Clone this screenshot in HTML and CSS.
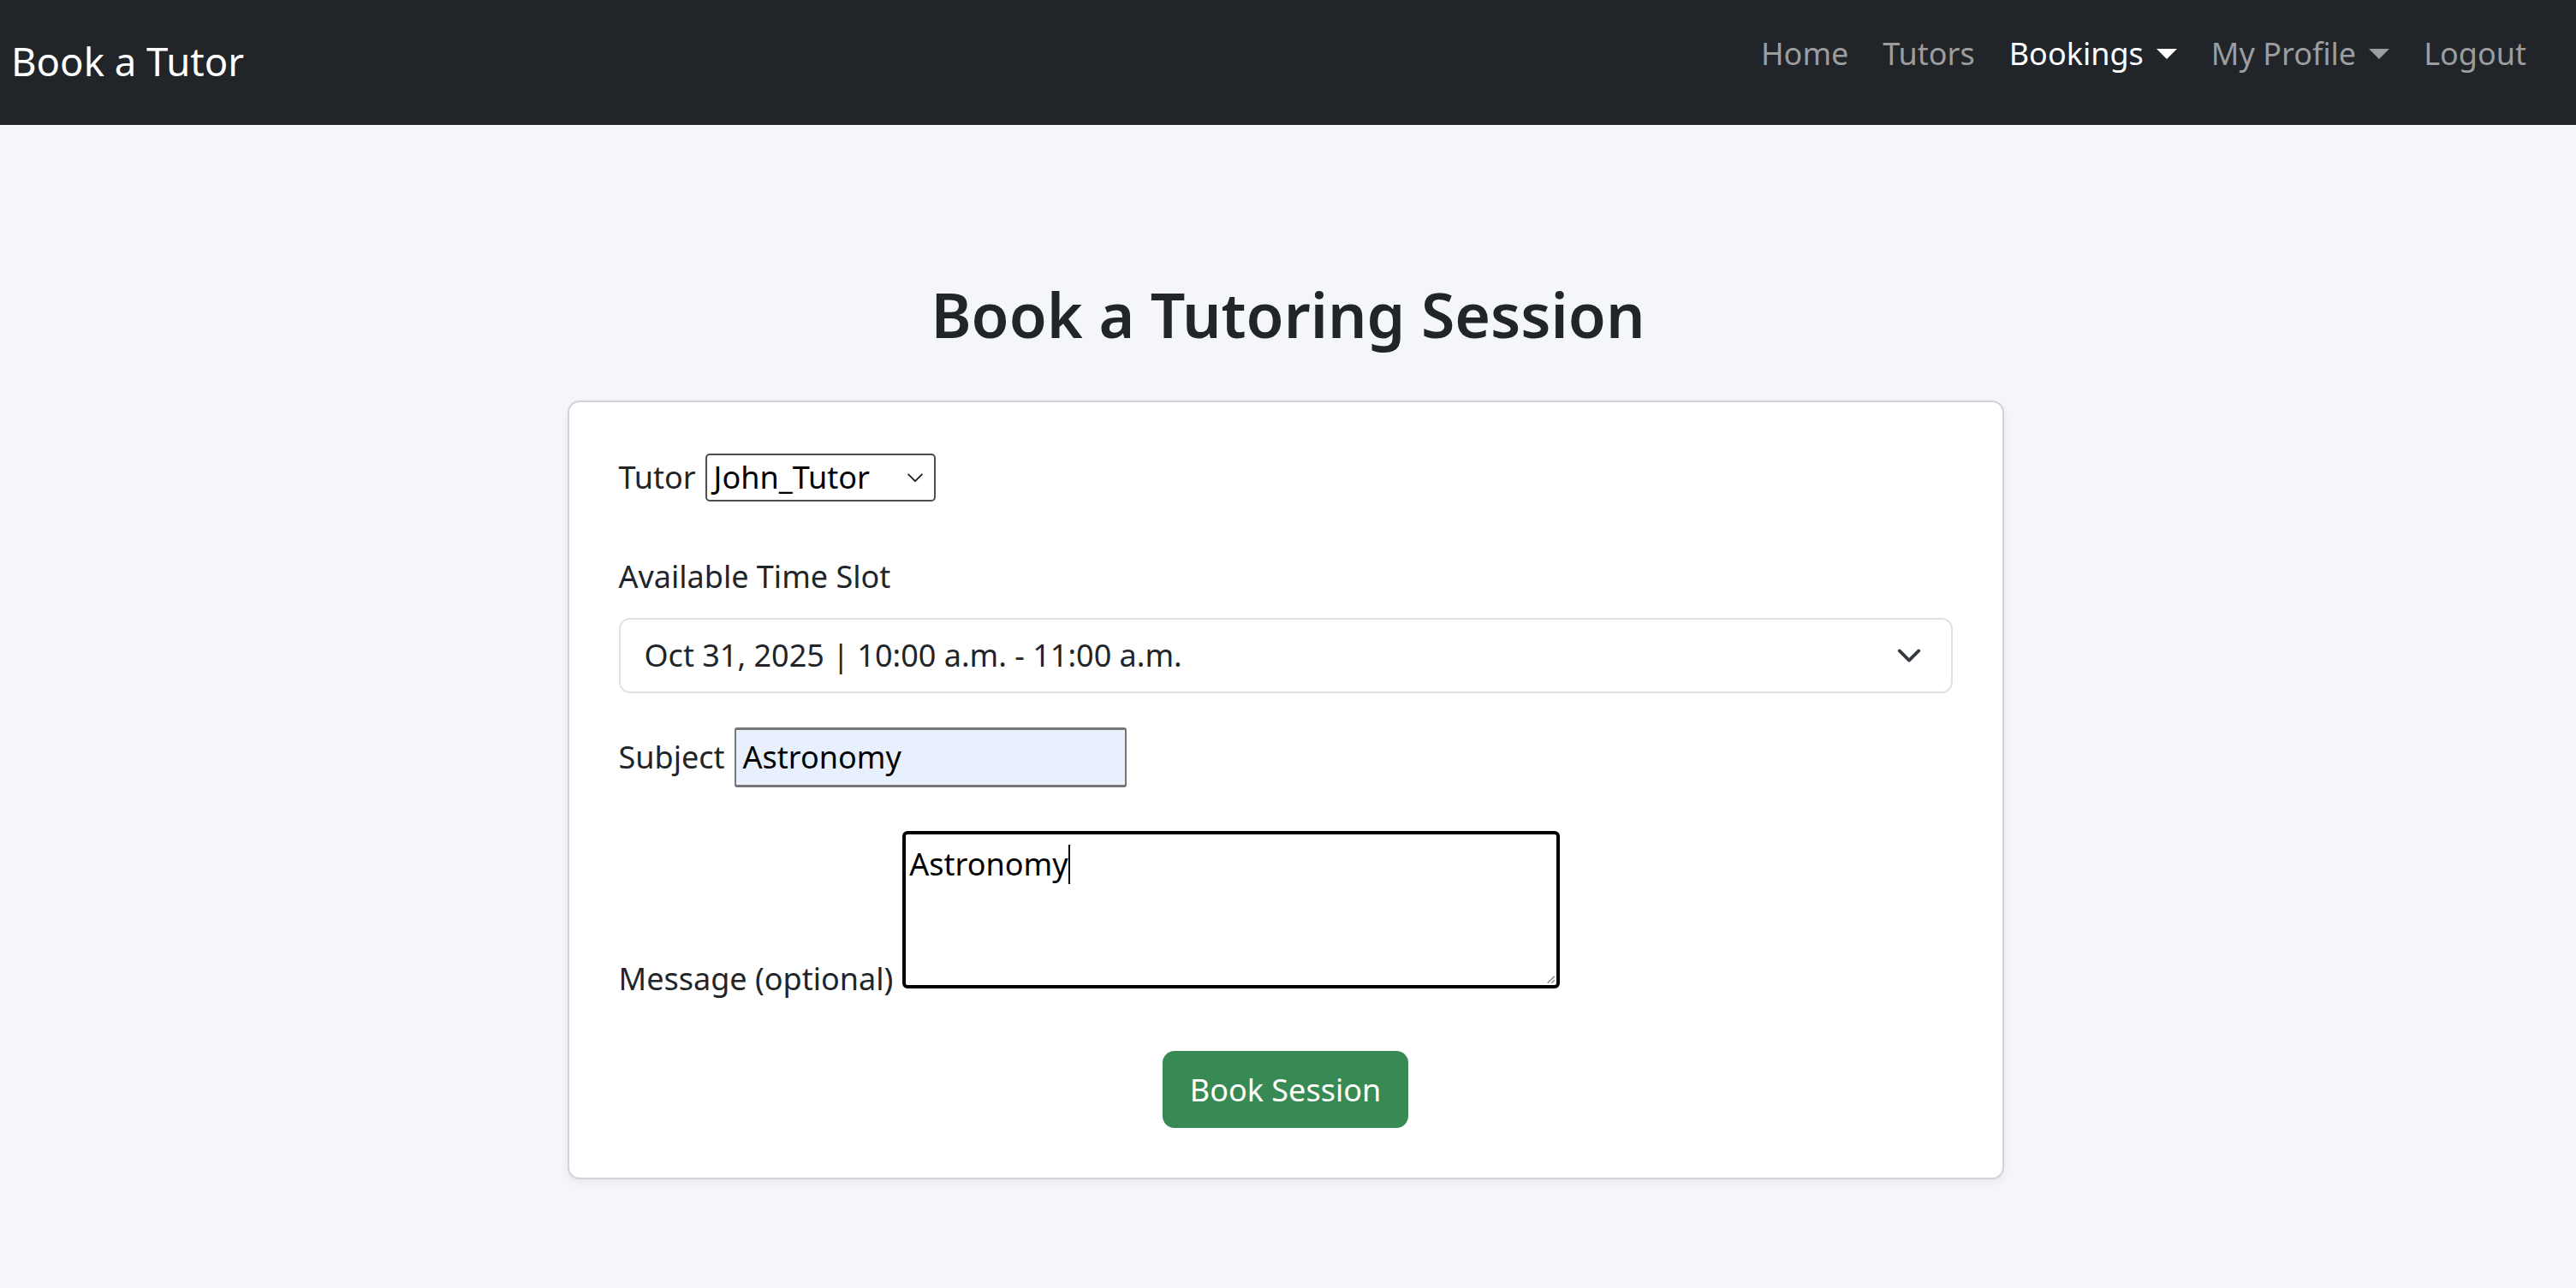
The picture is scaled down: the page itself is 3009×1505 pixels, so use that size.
FILE: index.html
```html
<!DOCTYPE html>
<html lang="en">
<head>
<meta charset="utf-8">
<title>Book a Tutoring Session</title>
<link rel="stylesheet" href="styles.css">
</head>
<body>
<nav class="navbar">
  <a class="brand" href="#">Book a Tutor</a>
  <ul class="nav">
    <li><a class="nav-link" href="#">Home</a></li>
    <li><a class="nav-link" href="#">Tutors</a></li>
    <li><a class="nav-link active has-caret" href="#">Bookings</a></li>
    <li><a class="nav-link has-caret" href="#">My Profile</a></li>
    <li><a class="nav-link" href="#">Logout</a></li>
  </ul>
</nav>
<main class="main">
  <h1 class="title">Book a Tutoring Session</h1>
  <section class="card">
    <form class="form">
      <div class="inline-field tutor-field">
        <label class="inline-label">Tutor</label>
        <div class="native-select">
          <span class="native-value">John_Tutor</span>
          <svg class="native-chevron" viewBox="0 0 16 10" width="20" height="12"><path d="M1 1.5 L8 8.5 L15 1.5" fill="none" stroke="#222" stroke-width="1.5"/></svg>
        </div>
      </div>
      <div class="block-field">
        <label class="block-label">Available Time Slot</label>
        <div class="form-select">
          <span class="select-value">Oct 31, 2025 | 10:00 a.m. - 11:00 a.m.</span>
          <svg class="select-chevron" viewBox="0 0 16 16" width="30" height="30"><path d="M2 5 L8 11 L14 5" fill="none" stroke="#343a40" stroke-width="2" stroke-linecap="round" stroke-linejoin="round"/></svg>
        </div>
      </div>
      <div class="inline-field subject-field">
        <label class="inline-label">Subject</label>
        <div class="text-input">Astronomy</div>
      </div>
      <div class="inline-field message-field">
        <label class="inline-label message-label">Message (optional)</label>
        <div class="textarea">
          <span class="textarea-text">Astronomy</span><span class="caret-line"></span>
          <svg class="resize-grip" viewBox="0 0 12 12" width="14" height="14"><path d="M11 4 L4 11 M11 8 L8 11" stroke="#888" stroke-width="1.2"/></svg>
        </div>
      </div>
      <div class="actions">
        <button class="btn-success" type="button">Book Session</button>
      </div>
    </form>
  </section>
</main>
</body>
</html>
```

FILE: styles.css
```css
* { box-sizing: border-box; }
html, body { margin: 0; padding: 0; }
body {
  font-family: "Noto Sans", "Open Sans", sans-serif;
  font-size: 36px;
  line-height: 1.5;
  color: #212529;
  background: #f5f6fa;
  min-height: 1505px;
}
.navbar {
  height: 146px;
  background: #212529;
  display: flex;
  align-items: center;
  justify-content: space-between;
  padding: 0 38px 4px 13px;
}
.brand {
  color: #fff;
  text-decoration: none;
  font-size: 45.5px;
  line-height: 60px;
}
.nav {
  list-style: none;
  margin: -16px 0 0;
  padding: 0;
  display: flex;
  align-items: center;
}
.nav-link {
  display: flex;
  align-items: center;
  color: #9c9d9f;
  text-decoration: none;
  padding: 0 20px;
  font-size: 36px;
  line-height: 54px;
}
.nav-link.active { color: #fff; }
.has-caret::after {
  content: "";
  display: inline-block;
  margin-left: 15px;
  border-top: 12px solid currentColor;
  border-left: 12px solid transparent;
  border-right: 12px solid transparent;
}
.main {
  display: flex;
  flex-direction: column;
  align-items: center;
  padding-top: 179px;
}
.title {
  margin: 0 0 57px;
  font-size: 71.5px;
  line-height: 86px;
  font-weight: 600;
}
.card {
  width: 1678px;
  background: #fff;
  border: 2px solid #d2d3d5;
  border-radius: 14px;
  box-shadow: 0 4px 8px rgba(0,0,0,0.06);
  padding: 60px 58px 58px;
  margin-left: -6px;
}
.form { display: flex; flex-direction: column; }
.inline-field {
  display: flex;
  align-items: center;
  gap: 11px;
}
.inline-label { white-space: nowrap; }
.native-select {
  width: 269px;
  height: 56px;
  border: 2px solid #4d4d4d;
  border-radius: 5px;
  display: flex;
  align-items: center;
  justify-content: space-between;
  padding: 0 12px 0 8px;
  color: #000;
}
.block-field { margin-top: 61px; }
.block-label { display: block; margin-bottom: 21px; }
.form-select {
  height: 88px;
  border: 2px solid #dee2e6;
  border-radius: 13px;
  display: flex;
  align-items: center;
  justify-content: space-between;
  padding: 0 34px 0 28px;
}
.subject-field { margin-top: 40px; }
.text-input {
  width: 458px;
  height: 70px;
  background: #e8f0fe;
  border: 2px solid #767676;
  border-top-width: 3px;
  border-bottom-width: 3px;
  border-radius: 3px;
  display: flex;
  align-items: center;
  padding: 0 8px;
  color: #000;
}
.message-field { margin-top: 51px; align-items: flex-end; }
.message-label { margin-bottom: -16px; }
.textarea {
  position: relative;
  width: 768px;
  height: 184px;
  border: 4px solid #000;
  border-radius: 6px;
  padding: 12px 4px 0;
  color: #000;
  line-height: 1.3;
}
.caret-line {
  display: inline-block;
  width: 2px;
  height: 46px;
  background: #000;
  vertical-align: -10px;
}
.resize-grip { position: absolute; right: 1px; bottom: 1px; }
.actions {
  display: flex;
  justify-content: center;
  margin-top: 73px;
}
.btn-success {
  font-family: inherit;
  font-size: 36px;
  color: #fff;
  background: #388a55;
  border: 0;
  border-radius: 14px;
  height: 90px;
  padding: 0 32px;
}
```
